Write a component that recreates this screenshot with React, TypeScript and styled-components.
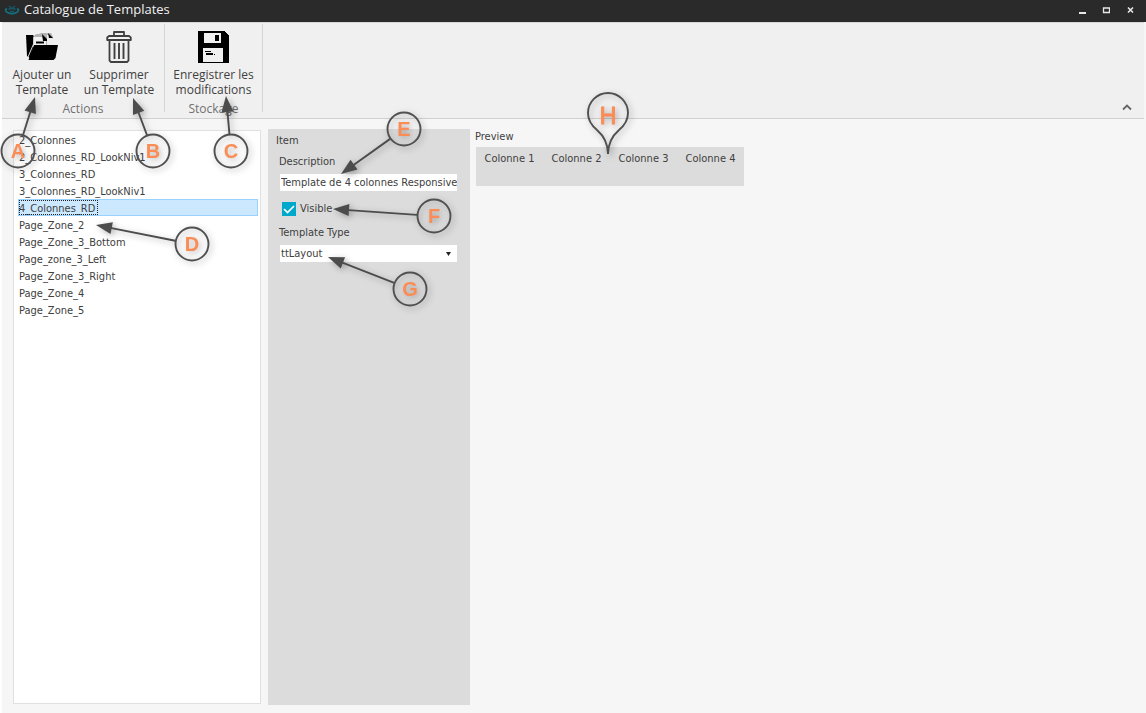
import React, { useState } from "react";
import styled, { createGlobalStyle } from "styled-components";

const GlobalStyle = createGlobalStyle`
  * { box-sizing: border-box; }
  html, body { margin: 0; padding: 0; }
  body { background: #f6f6f6; color: #404040; font: 11px/17px "DejaVu Sans Condensed", "DejaVu Sans", sans-serif; }
`;

const uiFont = `"Open Sans", "Noto Sans", sans-serif`;

const Window = styled.div`
  position: relative;
  display: flex;
  flex-direction: column;
  min-height: 100vh;
  overflow: hidden;
`;

const TitleBar = styled.header`
  display: flex;
  align-items: center;
  height: 22px;
  padding: 0 8px 2px 4px;
  background: #2a2a2a;
  color: #f0f0f0;
`;

const Title = styled.h1`
  flex: 1;
  margin: 0 0 2px 4px;
  font: 400 13px/18px ${uiFont};
`;

const WindowButton = styled.button`
  display: flex;
  align-items: center;
  justify-content: center;
  width: 16px;
  height: 20px;
  margin-left: 8px;
  padding: 0;
  border: 0;
  background: none;
`;

const Frame = styled.div`
  flex: 1;
  display: flex;
  flex-direction: column;
  border-left: 2px solid #fff;
`;

const Ribbon = styled.div`
  display: flex;
  align-items: stretch;
  height: 97px;
  margin-right: 2px;
  padding-top: 1px;
  border-top: 1px solid #d9d9d9;
  border-bottom: 1px solid #d0d0d0;
  background: #f0f0f0;
  font: 12px/15px ${uiFont};
`;

const RibbonGroup = styled.section<{ $width: number }>`
  display: flex;
  flex-direction: column;
  width: ${(p) => p.$width}px;
  margin-bottom: 6px;
  border-right: 1px solid #d4d4d4;
`;

const RibbonButtons = styled.div`
  display: flex;
  gap: 1px;
  padding: 0 2px;
`;

const RibbonButton = styled.button<{ $wide?: boolean }>`
  display: flex;
  flex-direction: column;
  align-items: center;
  gap: 4px;
  width: ${(p) => (p.$wide ? "100%" : "76px")};
  height: 77px;
  padding: 7px 0 0;
  border: 0;
  background: none;
  color: #404040;
  font: inherit;
  white-space: pre-line;
`;

const GroupLabel = styled.h2`
  margin: 0;
  color: #707070;
  font: inherit;
  text-align: center;
`;

const CollapseButton = styled.button`
  align-self: flex-end;
  margin: 0 8px 3px auto;
  padding: 4px;
  border: 0;
  background: none;
  line-height: 0;
`;

const Content = styled.main`
  flex: 1;
  display: flex;
  align-items: stretch;
  padding: 10px 11px 8px;
`;

const TemplateList = styled.ul`
  flex: 0 0 248px;
  margin: 1px 7px 1px 0;
  padding: 0 2px 0 4px;
  border: 1px solid #e0e0e0;
  background: #fff;
  list-style: none;
`;

const TemplateItem = styled.li<{ $selected: boolean }>`
  height: 17px;
  border: 1px solid ${(p) => (p.$selected ? "#99d1ff" : "transparent")};
  background: ${(p) => (p.$selected ? "#cce8ff" : "transparent")};
`;

const TemplateName = styled.span<{ $focused: boolean }>`
  display: block;
  width: max-content;
  height: 15px;
  padding-right: 3px;
  outline: ${(p) => (p.$focused ? "1px dotted #222" : "none")};
  outline-offset: -1px;
`;

const ItemPanel = styled.form`
  flex: 0 0 202px;
  display: flex;
  flex-direction: column;
  margin-right: 5px;
  padding: 3px 13px 0 8px;
  background: #dcdcdc;
`;

const PanelTitle = styled.h2`
  margin: 0;
  font: inherit;
`;

const FieldLabel = styled.label`
  margin: 4px 0 0 3px;
`;

const TextField = styled.input`
  height: 17px;
  margin: 4px 0 0 4px;
  padding: 0 0 0 1px;
  border: 0;
  background: #fff;
  color: inherit;
  font: inherit;
`;

const CheckLabel = styled.label`
  display: flex;
  align-items: center;
  gap: 4px;
  margin: 9px 0 3px 6px;
`;

const CheckBox = styled.input`
  appearance: none;
  width: 14px;
  height: 14px;
  margin: 0;
  background: #fff;
  &:checked {
    background: #00a8cc url("data:image/svg+xml,%3Csvg xmlns='http://www.w3.org/2000/svg' viewBox='0 0 14 14'%3E%3Cpath d='M2 7l3.5 3.5L12 4' fill='none' stroke='white' stroke-width='1.7'/%3E%3C/svg%3E");
  }
`;

const SelectBox = styled.span`
  display: grid;
  align-items: center;
  margin: 4px 0 0 4px;
  background: #fff;
  > * { grid-area: 1 / 1; }
  > svg { justify-self: end; margin-right: 6px; pointer-events: none; }
`;

const Select = styled.select`
  appearance: none;
  width: 100%;
  height: 17px;
  padding: 0 1px;
  border: 0;
  background: none;
  color: inherit;
  font: inherit;
`;

const PreviewPane = styled.section`
  flex: 1;
  min-width: 0;
`;

const PreviewTitle = styled.h2`
  margin: -1px 0 2px;
  font: inherit;
`;

const PreviewGrid = styled.div`
  display: grid;
  grid-template-columns: repeat(4, 67px);
  width: max-content;
  height: 39px;
  margin-left: 1px;
  padding-top: 3px;
  background: #dcdcdc;
  text-align: center;
`;

const Callouts = styled.svg`
  position: absolute;
  top: 0;
  left: 0;
  pointer-events: none;
  overflow: visible;
  filter: drop-shadow(2px 2px 3px rgba(0, 0, 0, 0.3));
`;

const CalloutLetter = styled.text`
  fill: #fa8c55;
  font: 700 20px "Liberation Sans", sans-serif;
  text-anchor: middle;
`;

const PinLetter = styled(CalloutLetter)`
  font-weight: 400;
  font-size: 23px;
  stroke: #fa8c55;
  stroke-width: 1;
`;

const templates = [
  "2_Colonnes",
  "2_Colonnes_RD_LookNiv1",
  "3_Colonnes_RD",
  "3_Colonnes_RD_LookNiv1",
  "4_Colonnes_RD",
  "Page_Zone_2",
  "Page_Zone_3_Bottom",
  "Page_zone_3_Left",
  "Page_Zone_3_Right",
  "Page_Zone_4",
  "Page_Zone_5",
];

/* Each callout: letter, circle centre, arrow tip. */
const callouts: [string, number, number, number, number][] = [
  ["A", 18, 151, 35, 97],
  ["B", 153, 151, 133, 98],
  ["C", 231, 151, 226, 96],
  ["D", 192, 244, 96, 225],
  ["E", 404, 129, 341, 174],
  ["F", 434, 216, 333, 209],
  ["G", 410, 289, 328, 257],
];

function Callout({ letter, x, y, tx, ty }: { letter: string; x: number; y: number; tx: number; ty: number }) {
  const length = Math.hypot(tx - x, ty - y);
  const angle = (Math.atan2(ty - y, tx - x) * 180) / Math.PI;
  return (
    <g>
      <circle cx={x} cy={y} r="16.5" fill="none" stroke="#505050" strokeWidth="1.9" />
      <g transform={`translate(${x} ${y}) rotate(${angle})`}>
        <path d={`M17 0H${length - 12}`} stroke="#4c4c4c" strokeWidth="1.9" />
        <path d={`M${length} 0l-16 -6v12z`} fill="#4c4c4c" />
      </g>
      <CalloutLetter x={x} y={y + 7}>{letter}</CalloutLetter>
    </g>
  );
}

const LogoIcon = () => (
  <svg width="16" height="12" viewBox="0 0 16 12" fill="none" aria-hidden="true">
    <path d="M3 4.500C.8 5.500 1 7.200 3.500 8.500c2.500 1.200 6.500 1.200 9 0 2.500-1.300 2.700-3 .5-4" stroke="#14707f" strokeWidth="1.700" />
    <path d="M5 2l2 1.500M11 2L9 3.500M4.500 5.500L8 4l3.500 1.500M6 7.500h4" stroke="#145a6b" strokeWidth="1.400" />
  </svg>
);

const FolderIcon = () => (
  <svg width="34" height="32" viewBox="0 0 34 32" aria-hidden="true">
    <path d="M1 4h7l2 3v4L5 27 2 25z" fill="#000" />
    <path d="M8 6l3-3h3l2-1h10l2 4v9H8z" fill="#b4b4b4" />
    <path d="M9 6h8l4 4v6H8z" fill="#f2f2f2" />
    <path d="M22 4h2l4 4v7h-6z" fill="#eee" />
    <path d="M17 3l5 5v2h-4zM23 2l5 5h-4zM11 10.500h8v2h-8z" fill="#000" />
    <path d="M9 14h24l-2.500 13-2 2H3.500z" fill="#000" />
    <path d="M3 26l5.500-13" stroke="#d8d8d8" strokeWidth="1" fill="none" />
  </svg>
);

const TrashIcon = () => (
  <svg width="26" height="32" viewBox="0 0 26 32" fill="none" stroke="#404040" strokeWidth="1.800" strokeLinejoin="round" aria-hidden="true">
    <path d="M8 5V1h10v4M1.200 9V6.500L3 5h20l1.800 1.500V9zM3.500 9v20.500L5 31h16l1.500-1.500V9" />
    <path d="M8.500 12v16M13 12v16M17.500 12v16" strokeWidth="1.900" />
  </svg>
);

const SaveIcon = () => (
  <svg width="32" height="32" viewBox="0 0 32 32" shapeRendering="crispEdges" aria-hidden="true">
    <path d="M0 0h26l5 5v27H0z" fill="#000" />
    <path d="M6 2h17v10H6zM5 17h20v14H5z" fill="#f0f0f0" />
    <path d="M17 4h4v6h-4zM7 20h6v1H7zM8 22h7v2H8zM16 23h1v1h-1z" fill="#000" />
  </svg>
);

export default function App() {
  const [selected, setSelected] = useState("4_Colonnes_RD");
  const [visible, setVisible] = useState(true);

  return (
    <Window>
      <GlobalStyle />
      <TitleBar>
        <LogoIcon />
        <Title>Catalogue de Templates</Title>
        <WindowButton aria-label="Réduire">
          <svg width="8" height="8"><path d="M1 6h7v2H1z" fill="#e8e8e8" /></svg>
        </WindowButton>
        <WindowButton aria-label="Agrandir">
          <svg width="8" height="8"><path d="M1.500 2h6v4.500h-6z" fill="none" stroke="#e8e8e8" strokeWidth="1.300" /></svg>
        </WindowButton>
        <WindowButton aria-label="Fermer">
          <svg width="8" height="8"><path d="M2 1.500l5 5M7 1.500l-5 5" stroke="#e8e8e8" strokeWidth="1.600" /></svg>
        </WindowButton>
      </TitleBar>

      <Frame>
        <Ribbon>
          <RibbonGroup $width={163}>
            <RibbonButtons>
              <RibbonButton><FolderIcon />{"Ajouter un\nTemplate"}</RibbonButton>
              <RibbonButton><TrashIcon />{"Supprimer\nun Template"}</RibbonButton>
            </RibbonButtons>
            <GroupLabel>Actions</GroupLabel>
          </RibbonGroup>
          <RibbonGroup $width={98}>
            <RibbonButtons>
              <RibbonButton $wide><SaveIcon />{"Enregistrer les\nmodifications"}</RibbonButton>
            </RibbonButtons>
            <GroupLabel>Stockage</GroupLabel>
          </RibbonGroup>
          <CollapseButton aria-label="Réduire le ruban">
            <svg width="10" height="7"><path d="M1 5.500l4-4 4 4" fill="none" stroke="#666" strokeWidth="1.800" /></svg>
          </CollapseButton>
        </Ribbon>

        <Content>
          <TemplateList role="listbox" aria-label="Templates">
            {templates.map((name) => (
              <TemplateItem
                key={name}
                role="option"
                aria-selected={name === selected}
                $selected={name === selected}
                onClick={() => setSelected(name)}
              >
                <TemplateName $focused={name === selected}>{name}</TemplateName>
              </TemplateItem>
            ))}
          </TemplateList>

          <ItemPanel>
            <PanelTitle>Item</PanelTitle>
            <FieldLabel htmlFor="description">Description</FieldLabel>
            <TextField id="description" defaultValue="Template de 4 colonnes Responsive" />
            <CheckLabel>
              <CheckBox type="checkbox" checked={visible} onChange={(e) => setVisible(e.target.checked)} />
              Visible
            </CheckLabel>
            <FieldLabel htmlFor="type">Template Type</FieldLabel>
            <SelectBox>
              <Select id="type" defaultValue="ttLayout">
                <option>ttLayout</option>
              </Select>
              <svg width="5" height="4"><path d="M0 0h5L2.500 4z" fill="#222" /></svg>
            </SelectBox>
          </ItemPanel>

          <PreviewPane>
            <PreviewTitle>Preview</PreviewTitle>
            <PreviewGrid>
              {[1, 2, 3, 4].map((n) => (
                <span key={n}>Colonne {n}</span>
              ))}
            </PreviewGrid>
          </PreviewPane>
        </Content>
      </Frame>

      <Callouts width="640" height="320">
        {callouts.map(([letter, x, y, tx, ty]) => (
          <Callout key={letter} letter={letter} x={x} y={y} tx={tx} ty={ty} />
        ))}
        <path
          d="M608 154C608 144 605 137 597 130C591 125 588 120 588 113A20 20 0 0 1 628 113C628 120 625 125 619 130C611 137 608 144 608 154Z"
          fill="none"
          stroke="#505050"
          strokeWidth="1.900"
        />
        <PinLetter x={608} y={124}>H</PinLetter>
      </Callouts>
    </Window>
  );
}
